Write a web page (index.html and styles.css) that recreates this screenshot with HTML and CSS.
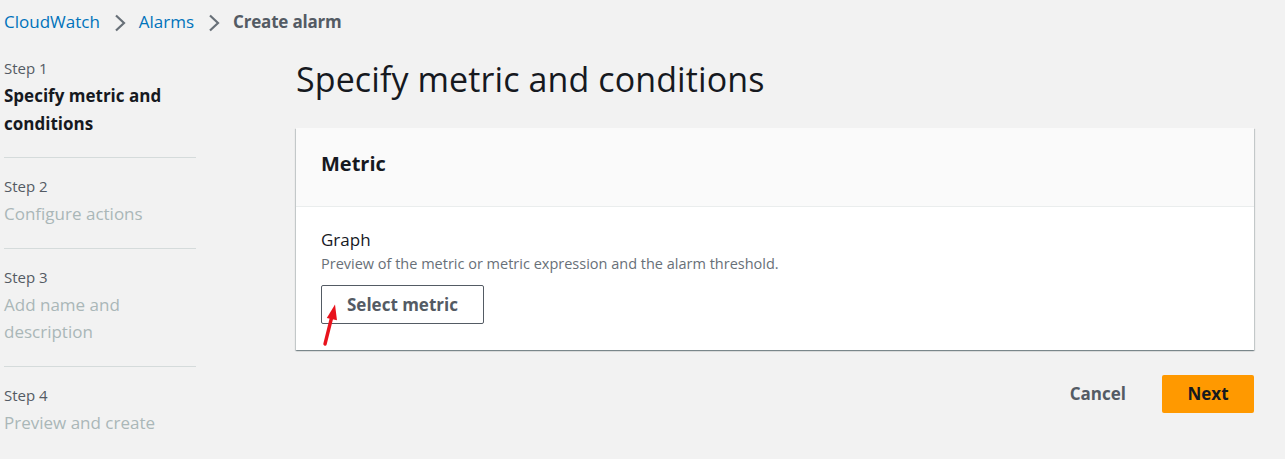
FILE: index.html
```html
<!DOCTYPE html>
<html lang="en">
<head>
<meta charset="utf-8">
<title>Create alarm</title>
<link rel="stylesheet" href="styles.css">
</head>
<body>
<nav class="breadcrumbs">
  <a class="crumb-link" href="#">CloudWatch</a>
  <svg class="chev" viewBox="0 0 12 18" width="12" height="18"><path d="M2 1.5L10 9L2 16.5" fill="none" stroke="#687078" stroke-width="2.2"/></svg>
  <a class="crumb-link" href="#">Alarms</a>
  <svg class="chev" viewBox="0 0 12 18" width="12" height="18"><path d="M2 1.5L10 9L2 16.5" fill="none" stroke="#687078" stroke-width="2.2"/></svg>
  <span class="crumb-current">Create alarm</span>
</nav>
<div class="layout">
  <ol class="steps">
    <li class="step">
      <div class="step-label">Step 1</div>
      <div class="step-title active">Specify metric and conditions</div>
    </li>
    <li class="step">
      <div class="step-label">Step 2</div>
      <div class="step-title">Configure actions</div>
    </li>
    <li class="step">
      <div class="step-label">Step 3</div>
      <div class="step-title">Add name and description</div>
    </li>
    <li class="step last">
      <div class="step-label">Step 4</div>
      <div class="step-title">Preview and create</div>
    </li>
  </ol>
  <main class="content">
    <h1 class="page-title">Specify metric and conditions</h1>
    <section class="card">
      <header class="card-header"><h2>Metric</h2></header>
      <div class="card-body">
        <div class="field-label">Graph</div>
        <div class="field-desc">Preview of the metric or metric expression and the alarm threshold.</div>
        <button class="btn-normal" type="button">Select metric</button>
        <svg class="annot-arrow" viewBox="0 0 20 48" width="20" height="48">
          <line x1="5" y1="43" x2="12" y2="15" stroke="#e8121c" stroke-width="3.4" stroke-linecap="round"/>
          <polygon points="15,3.5 6.8,17 17,19.3" fill="#e8121c"/>
        </svg>
      </div>
    </section>
    <div class="actions">
      <button class="btn-link" type="button">Cancel</button>
      <button class="btn-primary" type="button">Next</button>
    </div>
  </main>
</div>
</body>
</html>
```
FILE: styles.css
```css
* { box-sizing: border-box; }
html, body {
  margin: 0;
  padding: 0;
  background: #f2f2f2;
  font-family: "Open Sans", "Noto Sans", sans-serif;
  color: #16191f;
}
.breadcrumbs {
  display: flex;
  align-items: center;
  padding: 11px 0 0 4px;
  height: 33px;
  font-size: 17px;
  line-height: 22px;
}
.crumb-link {
  color: #0073bb;
  text-decoration: none;
}
.chev {
  display: block;
  margin: 1px 13px 0 14px;
}
.crumb-current {
  color: #545b64;
  font-weight: 700;
  letter-spacing: -0.2px;
}
.layout {
  display: flex;
  gap: 100px;
  padding: 25px 31px 0 4px;
}
.steps {
  list-style: none;
  margin: 0;
  padding: 0;
  width: 192px;
  flex: none;
}
.step {
  padding: 0 0 20px;
  border-bottom: 1px solid #d5dbdb;
  margin-bottom: 18px;
}
.step.last { border-bottom: none; }
.step-label {
  font-size: 15px;
  line-height: 20px;
  color: #545b64;
  margin-bottom: 4px;
}
.step-title {
  font-size: 17px;
  line-height: 27.5px;
  color: #aab7b8;
}
.step-title.active {
  color: #16191f;
  font-weight: 700;
}
.content {
  flex: 1;
  min-width: 0;
}
.page-title {
  margin: 2px 0 30px;
  font-size: 34px;
  line-height: 38px;
  font-weight: 400;
  color: #16191f;
  letter-spacing: 0.1px;
}
.card {
  background: #ffffff;
  box-shadow: 0 1px 1px 0 rgba(0, 28, 36, 0.3), 1px 1px 1px 0 rgba(0, 28, 36, 0.15), -1px 1px 1px 0 rgba(0, 28, 36, 0.15);
}
.card-header {
  background: #fafafa;
  border-bottom: 1px solid #eaeded;
  padding: 23px 25px 29px;
}
.card-header h2 {
  margin: 0;
  font-size: 20px;
  line-height: 26px;
  font-weight: 700;
}
.card-body {
  position: relative;
  padding: 21px 25px 26px;
}
.field-label {
  font-size: 17px;
  line-height: 24px;
  color: #16191f;
  margin-bottom: 2px;
}
.field-desc {
  font-size: 14.5px;
  line-height: 20px;
  color: #687078;
  margin-bottom: 11px;
}
.btn-normal {
  display: block;
  font-family: inherit;
  font-size: 17px;
  line-height: 28px;
  font-weight: 700;
  color: #545b64;
  background: #ffffff;
  border: 1px solid #545b64;
  border-radius: 2px;
  padding: 4px 25px;
  width: 163px;
  height: 39px;
  text-align: left;
}
.annot-arrow {
  position: absolute;
  left: 24px;
  top: 94px;
}
.actions {
  display: flex;
  justify-content: flex-end;
  align-items: center;
  gap: 10px;
  margin-top: 25px;
}
.btn-link, .btn-primary {
  font-family: inherit;
  font-size: 17px;
  line-height: 28px;
  font-weight: 700;
  border-radius: 2px;
  padding: 5px 26px;
  border: none;
  height: 38px;
}
.btn-link {
  background: transparent;
  color: #545b64;
}
.btn-primary {
  background: #ff9900;
  color: #16191f;
  width: 92px;
  text-align: center;
  padding: 5px 0;
}
```
